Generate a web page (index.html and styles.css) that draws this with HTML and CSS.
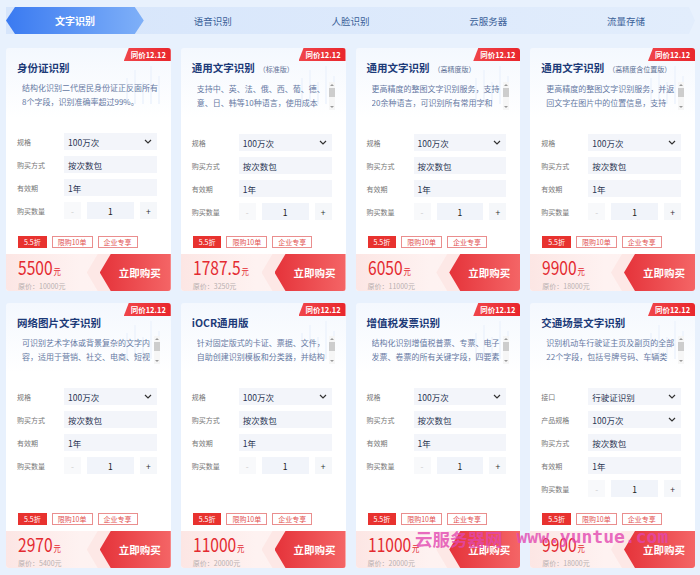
FILE: index.html
```html
<!DOCTYPE html>
<html>

<head>
    <meta charset="utf-8">
    <title>文字识别</title>
    <link rel="stylesheet" href="styles.css">
</head>

<body>
    <nav class="tab-bar">
        <a class="tab active">文字识别</a>
        <a class="tab">语音识别</a>
        <a class="tab">人脸识别</a>
        <a class="tab">云服务器</a>
        <a class="tab">流量存储</a>
    </nav>

    <div class="card-grid">
        <!-- row 1 -->
        <div class="card">
            <span class="badge">同价12.12</span>
            <svg class="deco" width="56" height="48" viewBox="0 0 56 48"><path d="M14 48V22M22 48V14M30 48V26M38 48V10M46 48V20" stroke="#f0f5fd" stroke-width="2" fill="none"/></svg>
            <h2 class="title">身份证识别</h2>
            <div class="desc"><p class="desc-text">结构化识别二代居民身份证正反面所有8个字段，识别准确率超过99%。</p></div>
            <div class="form">
                <div class="row"><span class="label">规格</span><div class="field select">100万次<svg width="8" height="5" viewBox="0 0 8 5"><path d="M1 1L4 4L7 1" stroke="#333" stroke-width="1.2" fill="none"/></svg></div></div>
                <div class="row"><span class="label">购买方式</span><div class="field">按次数包</div></div>
                <div class="row"><span class="label">有效期</span><div class="field">1年</div></div>
                <div class="row"><span class="label">购买数量</span><div class="qty"><span class="minus">-</span><span class="num">1</span><span class="plus">+</span></div></div>
            </div>
            <div class="tags"><span class="tag fill">5.5折</span><span class="tag">限购10单</span><span class="tag">企业专享</span></div>
            <div class="footer">
                <div class="price"><div class="now">5500<small>元</small></div><div class="old">原价：10000元</div></div>
                <a class="buy">立即购买</a>
            </div>
        </div>

        <div class="card">
            <span class="badge">同价12.12</span>
            <svg class="deco" width="56" height="48" viewBox="0 0 56 48"><path d="M14 48V22M22 48V14M30 48V26M38 48V10M46 48V20" stroke="#f0f5fd" stroke-width="2" fill="none"/></svg>
            <h2 class="title">通用文字识别<span class="sub">（标准版）</span></h2>
            <div class="desc"><p class="desc-text">支持中、英、法、俄、西、葡、德、意、日、韩等10种语言，使用成本低，适用于各类通用场景的文字识别。</p><div class="scrollbar"><i class="up"></i><i class="thumb"></i><i class="down"></i></div></div>
            <div class="form">
                <div class="row"><span class="label">规格</span><div class="field select">100万次<svg width="8" height="5" viewBox="0 0 8 5"><path d="M1 1L4 4L7 1" stroke="#333" stroke-width="1.2" fill="none"/></svg></div></div>
                <div class="row"><span class="label">购买方式</span><div class="field">按次数包</div></div>
                <div class="row"><span class="label">有效期</span><div class="field">1年</div></div>
                <div class="row"><span class="label">购买数量</span><div class="qty"><span class="minus">-</span><span class="num">1</span><span class="plus">+</span></div></div>
            </div>
            <div class="tags"><span class="tag fill">5.5折</span><span class="tag">限购10单</span><span class="tag">企业专享</span></div>
            <div class="footer">
                <div class="price"><div class="now">1787.5<small>元</small></div><div class="old">原价：3250元</div></div>
                <a class="buy">立即购买</a>
            </div>
        </div>

        <div class="card">
            <span class="badge">同价12.12</span>
            <svg class="deco" width="56" height="48" viewBox="0 0 56 48"><path d="M14 48V22M22 48V14M30 48V26M38 48V10M46 48V20" stroke="#f0f5fd" stroke-width="2" fill="none"/></svg>
            <h2 class="title">通用文字识别<span class="sub">（高精度版）</span></h2>
            <div class="desc"><p class="desc-text">更高精度的整图文字识别服务，支持20余种语言，可识别所有常用字和生僻字，准确率更高。</p><div class="scrollbar"><i class="up"></i><i class="thumb"></i><i class="down"></i></div></div>
            <div class="form">
                <div class="row"><span class="label">规格</span><div class="field select">100万次<svg width="8" height="5" viewBox="0 0 8 5"><path d="M1 1L4 4L7 1" stroke="#333" stroke-width="1.2" fill="none"/></svg></div></div>
                <div class="row"><span class="label">购买方式</span><div class="field">按次数包</div></div>
                <div class="row"><span class="label">有效期</span><div class="field">1年</div></div>
                <div class="row"><span class="label">购买数量</span><div class="qty"><span class="minus">-</span><span class="num">1</span><span class="plus">+</span></div></div>
            </div>
            <div class="tags"><span class="tag fill">5.5折</span><span class="tag">限购10单</span><span class="tag">企业专享</span></div>
            <div class="footer">
                <div class="price"><div class="now">6050<small>元</small></div><div class="old">原价：11000元</div></div>
                <a class="buy">立即购买</a>
            </div>
        </div>

        <div class="card">
            <span class="badge">同价12.12</span>
            <svg class="deco" width="56" height="48" viewBox="0 0 56 48"><path d="M14 48V22M22 48V14M30 48V26M38 48V10M46 48V20" stroke="#f0f5fd" stroke-width="2" fill="none"/></svg>
            <h2 class="title">通用文字识别<span class="sub">（高精度含位置版）</span></h2>
            <div class="desc"><p class="desc-text">更高精度的整图文字识别服务，并返回文字在图片中的位置信息，支持20余种语言的识别。</p><div class="scrollbar"><i class="up"></i><i class="thumb"></i><i class="down"></i></div></div>
            <div class="form">
                <div class="row"><span class="label">规格</span><div class="field select">100万次<svg width="8" height="5" viewBox="0 0 8 5"><path d="M1 1L4 4L7 1" stroke="#333" stroke-width="1.2" fill="none"/></svg></div></div>
                <div class="row"><span class="label">购买方式</span><div class="field">按次数包</div></div>
                <div class="row"><span class="label">有效期</span><div class="field">1年</div></div>
                <div class="row"><span class="label">购买数量</span><div class="qty"><span class="minus">-</span><span class="num">1</span><span class="plus">+</span></div></div>
            </div>
            <div class="tags"><span class="tag fill">5.5折</span><span class="tag">限购10单</span><span class="tag">企业专享</span></div>
            <div class="footer">
                <div class="price"><div class="now">9900<small>元</small></div><div class="old">原价：18000元</div></div>
                <a class="buy">立即购买</a>
            </div>
        </div>

        <!-- row 2 -->
        <div class="card">
            <span class="badge">同价12.12</span>
            <svg class="deco" width="56" height="48" viewBox="0 0 56 48"><path d="M14 48V22M22 48V14M30 48V26M38 48V10M46 48V20" stroke="#f0f5fd" stroke-width="2" fill="none"/></svg>
            <h2 class="title">网络图片文字识别</h2>
            <div class="desc"><p class="desc-text">可识别艺术字体或背景复杂的文字内容，适用于营销、社交、电商、短视频等场景的图片识别。</p><div class="scrollbar"><i class="up"></i><i class="thumb"></i><i class="down"></i></div></div>
            <div class="form">
                <div class="row"><span class="label">规格</span><div class="field select">100万次<svg width="8" height="5" viewBox="0 0 8 5"><path d="M1 1L4 4L7 1" stroke="#333" stroke-width="1.2" fill="none"/></svg></div></div>
                <div class="row"><span class="label">购买方式</span><div class="field">按次数包</div></div>
                <div class="row"><span class="label">有效期</span><div class="field">1年</div></div>
                <div class="row"><span class="label">购买数量</span><div class="qty"><span class="minus">-</span><span class="num">1</span><span class="plus">+</span></div></div>
            </div>
            <div class="tags"><span class="tag fill">5.5折</span><span class="tag">限购10单</span><span class="tag">企业专享</span></div>
            <div class="footer">
                <div class="price"><div class="now">2970<small>元</small></div><div class="old">原价：5400元</div></div>
                <a class="buy">立即购买</a>
            </div>
        </div>

        <div class="card">
            <span class="badge">同价12.12</span>
            <svg class="deco" width="56" height="48" viewBox="0 0 56 48"><path d="M14 48V22M22 48V14M30 48V26M38 48V10M46 48V20" stroke="#f0f5fd" stroke-width="2" fill="none"/></svg>
            <h2 class="title">iOCR通用版</h2>
            <div class="desc"><p class="desc-text">针对固定版式的卡证、票据、文件，自助创建识别模板和分类器，并结构化输出识别结果。</p><div class="scrollbar"><i class="up"></i><i class="thumb"></i><i class="down"></i></div></div>
            <div class="form">
                <div class="row"><span class="label">规格</span><div class="field select">100万次<svg width="8" height="5" viewBox="0 0 8 5"><path d="M1 1L4 4L7 1" stroke="#333" stroke-width="1.2" fill="none"/></svg></div></div>
                <div class="row"><span class="label">购买方式</span><div class="field">按次数包</div></div>
                <div class="row"><span class="label">有效期</span><div class="field">1年</div></div>
                <div class="row"><span class="label">购买数量</span><div class="qty"><span class="minus">-</span><span class="num">1</span><span class="plus">+</span></div></div>
            </div>
            <div class="tags"><span class="tag fill">5.5折</span><span class="tag">限购10单</span><span class="tag">企业专享</span></div>
            <div class="footer">
                <div class="price"><div class="now">11000<small>元</small></div><div class="old">原价：20000元</div></div>
                <a class="buy">立即购买</a>
            </div>
        </div>

        <div class="card">
            <span class="badge">同价12.12</span>
            <svg class="deco" width="56" height="48" viewBox="0 0 56 48"><path d="M14 48V22M22 48V14M30 48V26M38 48V10M46 48V20" stroke="#f0f5fd" stroke-width="2" fill="none"/></svg>
            <h2 class="title">增值税发票识别</h2>
            <div class="desc"><p class="desc-text">结构化识别增值税普票、专票、电子发票、卷票的所有关键字段，四要素信息准确率高。</p><div class="scrollbar"><i class="up"></i><i class="thumb"></i><i class="down"></i></div></div>
            <div class="form">
                <div class="row"><span class="label">规格</span><div class="field select">100万次<svg width="8" height="5" viewBox="0 0 8 5"><path d="M1 1L4 4L7 1" stroke="#333" stroke-width="1.2" fill="none"/></svg></div></div>
                <div class="row"><span class="label">购买方式</span><div class="field">按次数包</div></div>
                <div class="row"><span class="label">有效期</span><div class="field">1年</div></div>
                <div class="row"><span class="label">购买数量</span><div class="qty"><span class="minus">-</span><span class="num">1</span><span class="plus">+</span></div></div>
            </div>
            <div class="tags"><span class="tag fill">5.5折</span><span class="tag">限购10单</span><span class="tag">企业专享</span></div>
            <div class="footer">
                <div class="price"><div class="now">11000<small>元</small></div><div class="old">原价：20000元</div></div>
                <a class="buy">立即购买</a>
            </div>
        </div>

        <div class="card">
            <span class="badge">同价12.12</span>
            <svg class="deco" width="56" height="48" viewBox="0 0 56 48"><path d="M14 48V22M22 48V14M30 48V26M38 48V10M46 48V20" stroke="#f0f5fd" stroke-width="2" fill="none"/></svg>
            <h2 class="title">交通场景文字识别</h2>
            <div class="desc"><p class="desc-text">识别机动车行驶证主页及副页的全部22个字段，包括号牌号码、车辆类型、所有人、住址等。</p><div class="scrollbar"><i class="up"></i><i class="thumb"></i><i class="down"></i></div></div>
            <div class="form">
                <div class="row"><span class="label">接口</span><div class="field select">行驶证识别<svg width="8" height="5" viewBox="0 0 8 5"><path d="M1 1L4 4L7 1" stroke="#333" stroke-width="1.2" fill="none"/></svg></div></div>
                <div class="row"><span class="label">产品规格</span><div class="field select">100万次<svg width="8" height="5" viewBox="0 0 8 5"><path d="M1 1L4 4L7 1" stroke="#333" stroke-width="1.2" fill="none"/></svg></div></div>
                <div class="row"><span class="label">购买方式</span><div class="field">按次数包</div></div>
                <div class="row"><span class="label">有效期</span><div class="field">1年</div></div>
                <div class="row"><span class="label">购买数量</span><div class="qty"><span class="minus">-</span><span class="num">1</span><span class="plus">+</span></div></div>
            </div>
            <div class="tags"><span class="tag fill">5.5折</span><span class="tag">限购10单</span><span class="tag">企业专享</span></div>
            <div class="footer">
                <div class="price"><div class="now">9900<small>元</small></div><div class="old">原价：18000元</div></div>
                <a class="buy">立即购买</a>
            </div>
        </div>
    </div>

    <div class="watermark"><span class="wm-cn">云服务器网</span><span class="wm-en">www.yuntue.com</span></div>
</body>

</html>
```

FILE: styles.css
```css
body {
    margin: 0;
    padding: 7px 5px 0 6px;
    background-color: #e8f1fd;
    font-family: "Noto Sans CJK SC", "Noto Sans", sans-serif;
    color: #333;
    position: relative;
    height: 568px;
    overflow: hidden;
}

/* top tabs */
.tab-bar {
    display: flex;
    height: 27px;
    background: linear-gradient(90deg, #d6e5fb, #e2edfc);
    clip-path: polygon(0 0, calc(100% - 6px) 0, 100% 50%, calc(100% - 6px) 100%, 0 100%);
}

.tab {
    flex: 1;
    display: flex;
    align-items: center;
    justify-content: center;
    font-size: 9.5px;
    color: #3a5f98;
    cursor: pointer;
}

.tab.active {
    color: #fff;
    font-weight: bold;
    font-size: 10px;
    background: linear-gradient(90deg, #3a7af1, #7fb0f8);
    clip-path: polygon(9px 0, calc(100% - 9px) 0, 100% 50%, calc(100% - 9px) 100%, 9px 100%, 0 50%);
}

/* product cards */
.card-grid {
    display: grid;
    grid-template-columns: repeat(4, 1fr);
    gap: 12px 10px;
    margin-top: 14px;
}

.card {
    position: relative;
    display: flex;
    flex-direction: column;
    background: linear-gradient(180deg, #f4f8fe 0, #fff 70px);
    border-radius: 3px;
    overflow: hidden;
}

.badge {
    position: absolute;
    top: 0;
    right: 0;
    width: 47px;
    height: 13px;
    line-height: 13px;
    text-align: center;
    font-size: 7.5px;
    font-weight: bold;
    color: #fff;
    background: linear-gradient(90deg, #f0454a, #e9262c);
    clip-path: polygon(5px 0, 100% 0, 100% 100%, 0 100%);
    padding-left: 2px;
    box-sizing: border-box;
    z-index: 2;
}

.deco {
    position: absolute;
    top: 8px;
    right: 2px;
}

.title {
    position: relative;
    margin: 12px 11px 0;
    font-size: 10.5px;
    line-height: 16px;
    color: #1c3a78;
    font-weight: bold;
}

.title .sub {
    font-size: 7px;
    font-weight: normal;
    color: #5c6f93;
    margin-left: 4px;
}

.desc {
    position: relative;
    display: flex;
    gap: 3px;
    margin: 5px 11px 0;
    padding-left: 5px;
    height: 28px;
}

.desc-text {
    flex: 1;
    margin: 0;
    height: 28px;
    overflow: hidden;
    font-size: 8px;
    line-height: 14px;
    color: #6679a3;
}

/* fake scrollbar, the reference shows a classic one */
.scrollbar {
    width: 6px;
    display: flex;
    flex-direction: column;
    align-items: center;
    gap: 2px;
    padding: 2px 0;
    background-color: #f6f6f6;
}

.scrollbar .up,
.scrollbar .down {
    width: 0;
    height: 0;
    border-left: 2px solid transparent;
    border-right: 2px solid transparent;
}

.scrollbar .up {
    border-bottom: 2px solid #9a9a9a;
}

.scrollbar .down {
    border-top: 2px solid #9a9a9a;
    margin-top: auto;
}

.scrollbar .thumb {
    width: 6px;
    height: 9px;
    background-color: #cdcdcd;
}

.form {
    display: flex;
    flex-direction: column;
    gap: 6px;
    margin: 24px 14px 0 11px;
}

.row {
    display: flex;
    align-items: center;
    height: 17px;
}

.label {
    width: 47px;
    flex-shrink: 0;
    font-size: 7px;
    color: #777;
}

.field {
    flex: 1;
    height: 17px;
    display: flex;
    align-items: center;
    justify-content: space-between;
    padding: 0 5px 0 4px;
    background-color: #f3f5fa;
    font-size: 8.5px;
    color: #2b3553;
}

.qty {
    flex: 1;
    display: grid;
    grid-template-columns: 17px 1fr 17px;
    gap: 6px;
    height: 17px;
    font-size: 8.5px;
}

.qty span {
    display: flex;
    align-items: center;
    justify-content: center;
}

.qty .minus {
    background-color: #f8f9fb;
    color: #ccc;
}

.qty .num {
    background-color: #f1f4fa;
    color: #222;
}

.qty .plus {
    background-color: #f5f7fa;
    color: #333;
}

.tags {
    display: flex;
    gap: 5px;
    margin: auto 11px 6px 12px;
    padding-top: 16px;
}

.tag {
    height: 12px;
    line-height: 10px;
    padding: 0 5px;
    border: 1px solid #ea8e8e;
    box-sizing: border-box;
    font-size: 7px;
    color: #e25151;
}

.tag.fill {
    background-color: #e8322f;
    border-color: #e8322f;
    color: #fff;
}

.footer {
    position: relative;
    display: flex;
    height: 37px;
    background: linear-gradient(90deg, #fce6e4 0%, #fef2f1 45%, #fdf3f2 100%);
}

.footer::after {
    /* pale chevron behind the button */
    content: "";
    position: absolute;
    top: 0;
    right: 60px;
    width: 24px;
    height: 37px;
    background: #fde8e6;
    clip-path: polygon(11px 0, 100% 0, 100% 100%, 11px 100%, 0 50%);
}

.price {
    flex: 1;
    padding: 4px 0 0 12px;
}

.now {
    font-size: 19px;
    line-height: 18px;
    color: #e42a30;
    transform: scaleX(0.82);
    transform-origin: left center;
    white-space: nowrap;
}

.now small {
    font-size: 9px;
    margin-left: 1px;
}

.old {
    font-size: 7px;
    line-height: 10px;
    color: #b8b0b0;
}

.buy {
    position: relative;
    z-index: 1;
    width: 71px;
    display: flex;
    align-items: center;
    justify-content: center;
    padding-left: 9px;
    box-sizing: border-box;
    font-size: 10.5px;
    font-weight: bold;
    color: #fff;
    background: linear-gradient(90deg, #e5333a, #f46566);
    clip-path: polygon(11px 0, 100% 0, 100% 100%, 11px 100%, 0 50%);
    cursor: pointer;
}

/* overlay text burned into the screenshot */
.watermark {
    position: absolute;
    z-index: 5;
    left: 415px;
    top: 526px;
    display: flex;
    gap: 14px;
    color: rgba(226, 70, 176, 0.8);
    font-weight: bold;
    white-space: nowrap;
    pointer-events: none;
}

.wm-cn {
    font-size: 17.5px;
}

.wm-en {
    font-family: "DejaVu Sans Mono", monospace;
    font-size: 18px;
}
```
